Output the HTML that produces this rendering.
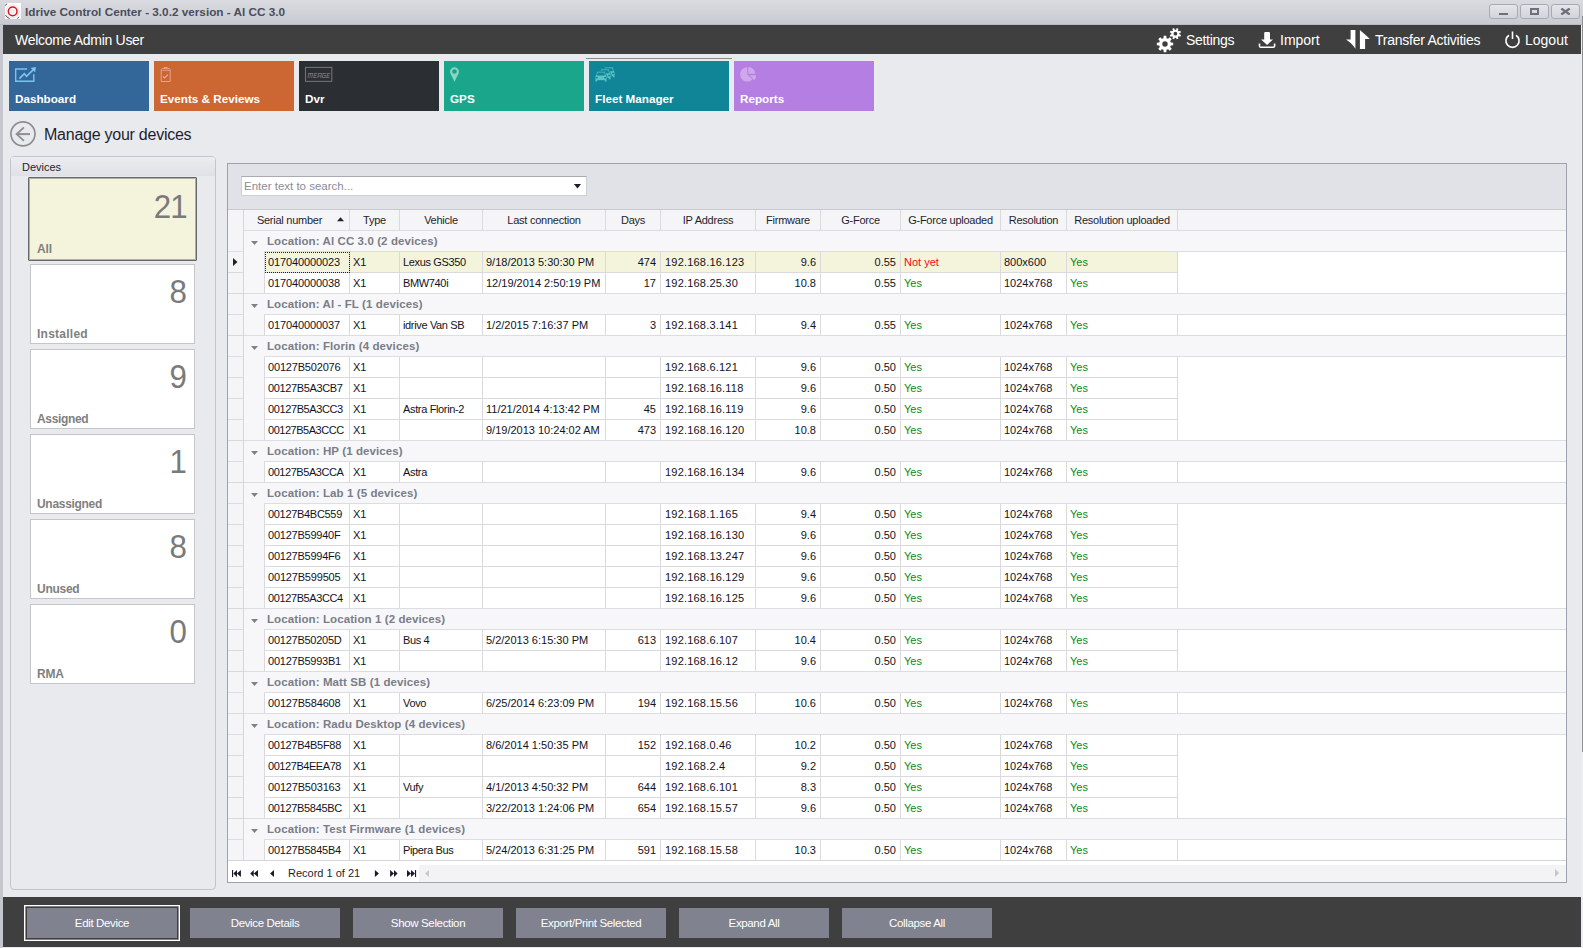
<!DOCTYPE html><html><head><meta charset="utf-8"><title>Idrive Control Center</title><style>
*{box-sizing:border-box}
html,body{margin:0;padding:0}
body{width:1583px;height:948px;overflow:hidden;position:relative;background:#e9eaee;font-family:"Liberation Sans",sans-serif;color:#1e1e2e}
.a{position:absolute}
.t{white-space:nowrap;line-height:1}
#title{left:0;top:0;width:1583px;height:25px;background:linear-gradient(#dadbe0,#c9cad1)}
#lb{left:0;top:25px;width:3px;height:923px;background:#c6c7ce}
#rb{left:1581px;top:25px;width:2px;height:923px;background:#ecedf0}
#topbar{left:3px;top:25px;width:1578px;height:29px;background:#3f3f3f}
#footer{left:3px;top:897px;width:1578px;height:50px;background:#3f3f3f}
.wbtn{top:4px;width:29px;height:15px;border:1px solid #a9aab3;border-radius:3px;background:linear-gradient(#e4e5ea,#d3d4da)}
.tile{top:61px;width:140px;height:50px}
.tile .lbl{position:absolute;left:6px;top:92px;color:#fff;font-weight:bold;font-size:11.7px}
.ttl{position:absolute;left:6px;top:32px;color:#fff;font-weight:bold;font-size:11.7px;line-height:1;white-space:nowrap}
.dtile{position:absolute;background:#fff;border:1px solid #c8c8cc}
.dtile .n{position:absolute;right:8px;font-size:32px;color:#7a7a7a;line-height:1}
.dtile .l{position:absolute;left:7px;font-size:11.5px;font-weight:bold;color:#7f7f7f;line-height:1}
.fbtn{position:absolute;top:908px;width:150px;height:30px;background:#808290;color:#fff;font-size:12px;text-align:center;line-height:30px}
.cell{position:absolute;height:21px;font-size:11px;line-height:21px;white-space:nowrap;overflow:hidden;color:#121224}
.hd{position:absolute;font-size:11px;letter-spacing:-0.25px;white-space:nowrap;color:#1e1e2e;line-height:20px;text-align:center}
.vl{position:absolute;width:1px;background:#d9d9de}
.hl{position:absolute;height:1px;background:#d9d9de}
.yes{color:#0b8a16}
.no{color:#f50a14}
</style></head><body>
<div class="a" id="title"></div><div class="a" style="left:0;top:24px;width:1583px;height:1px;background:#b9bac2"></div>
<div class="a" id="lb"></div><div class="a" id="rb"></div><div class="a" style="left:1582px;top:16px;width:1px;height:736px;background:#8e8e92"></div>
<div class="a" style="left:5px;top:3px;width:16px;height:16px;background:#fcfcfc"></div>
<svg class="a" style="left:5px;top:3px" width="16" height="16" viewBox="0 0 16 16"><circle cx="7.65" cy="8.3" r="6.6" fill="none" stroke="#dadada" stroke-width="0.6"/><circle cx="7.65" cy="8.3" r="4.35" fill="none" stroke="#e6101c" stroke-width="1.5"/><circle cx="7.65" cy="8.3" r="1.7" fill="none" stroke="#cfcfcf" stroke-width="0.6"/><path d="M0.3 2.6 L1.8 0.6 M0.6 12.2 A7.6 7.6 0 0 0 4.6 15.6 M12.3 15.6 L14 13.8" fill="none" stroke="#4a4a4a" stroke-width="1"/></svg>
<div class="a t" style="left:25px;top:6px;font-size:11.75px;font-weight:bold;color:#4a4d5c">Idrive Control Center - 3.0.2 version - Al CC 3.0</div>
<div class="a wbtn" style="left:1489px"></div><div class="a wbtn" style="left:1520px"></div><div class="a wbtn" style="left:1551px"></div>
<div class="a" style="left:1499px;top:13px;width:9px;height:2px;background:#6e707c"></div>
<div class="a" style="left:1530px;top:8px;width:9px;height:7px;border:2px solid #6e707c;border-width:2px 2px 2px 2px"></div>
<svg class="a" style="left:1560px;top:8px" width="11" height="7" viewBox="0 0 11 7"><path d="M1.3 0.5 L9.7 6.5 M9.7 0.5 L1.3 6.5" stroke="#6e707c" stroke-width="2.3"/></svg>
<div class="a" id="topbar"></div>
<div class="a t" style="left:15px;top:33px;font-size:14px;letter-spacing:-0.3px;color:#fff">Welcome Admin User</div>
<svg class="a" style="left:1155px;top:27px" width="28" height="26" viewBox="0 0 28 26"><path d="M8.55,11.18 L8.64,8.81 L11.36,8.81 L11.45,11.18 L13.09,11.86 L14.83,10.25 L16.75,12.17 L15.14,13.91 L15.82,15.55 L18.19,15.64 L18.19,18.36 L15.82,18.45 L15.14,20.09 L16.75,21.83 L14.83,23.75 L13.09,22.14 L11.45,22.82 L11.36,25.19 L8.64,25.19 L8.55,22.82 L6.91,22.14 L5.17,23.75 L3.25,21.83 L4.86,20.09 L4.18,18.45 L1.81,18.36 L1.81,15.64 L4.18,15.55 L4.86,13.91 L3.25,12.17 L5.17,10.25 L6.91,11.86Z" fill="#fff"/><circle cx="10" cy="17" r="2.7" fill="#3f3f3f"/><path d="M21.01,2.65 L21.71,1.05 L23.47,1.78 L22.84,3.40 L23.70,4.26 L25.32,3.63 L26.05,5.39 L24.45,6.09 L24.45,7.31 L26.05,8.01 L25.32,9.77 L23.70,9.14 L22.84,10.00 L23.47,11.62 L21.71,12.35 L21.01,10.75 L19.79,10.75 L19.09,12.35 L17.33,11.62 L17.96,10.00 L17.10,9.14 L15.48,9.77 L14.75,8.01 L16.35,7.31 L16.35,6.09 L14.75,5.39 L15.48,3.63 L17.10,4.26 L17.96,3.40 L17.33,1.78 L19.09,1.05 L19.79,2.65Z" fill="#fff"/><circle cx="20.4" cy="6.7" r="1.9" fill="#3f3f3f"/></svg>
<div class="a t" style="left:1186px;top:33px;font-size:14px;letter-spacing:-0.3px;color:#fff">Settings</div>
<svg class="a" style="left:1258px;top:31px" width="18" height="18" viewBox="0 0 18 18"><path d="M6.2 2.2 Q6.2 1 7.4 1 H10.8 Q12 1 12 2.2 V8.4 H15 L9.1 13.9 L3.1 8.4 H6.2Z" fill="#fff"/><path d="M1.5 12.4 V15 Q1.5 16.3 2.8 16.3 H15.3 Q16.6 16.3 16.6 15 V12.4" fill="none" stroke="#fff" stroke-width="1.6"/></svg>
<div class="a t" style="left:1280px;top:33px;font-size:14px;letter-spacing:0px;color:#fff">Import</div>
<svg class="a" style="left:1346px;top:29px" width="24" height="20" viewBox="0 0 24 20"><path d="M4.6 1 H9.4 V19.8 Q6.5 14.8 -0.1 10.4 H4.6 Z" fill="#fff"/><path d="M13.9 20 V1.1 Q17.5 4.2 23.8 9.9 H19.1 V20 Z" fill="#fff"/></svg>
<div class="a t" style="left:1375px;top:33px;font-size:14px;letter-spacing:-0.25px;color:#fff">Transfer Activities</div>
<svg class="a" style="left:1504px;top:31px" width="17" height="18" viewBox="0 0 17 18"><path d="M5 4.2 A6.6 6.6 0 1 0 12 4.2" fill="none" stroke="#fff" stroke-width="1.6"/><path d="M8.5 0.5 V8" stroke="#fff" stroke-width="1.6"/></svg>
<div class="a t" style="left:1525px;top:33px;font-size:14px;letter-spacing:0px;color:#fff">Logout</div>
<div class="a tile" style="left:9px;background:#336699"><div class="ttl">Dashboard</div></div>
<div class="a tile" style="left:154px;background:#cc6633"><div class="ttl">Events &amp; Reviews</div></div>
<div class="a tile" style="left:299px;background:#2b2e33"><div class="ttl">Dvr</div></div>
<div class="a tile" style="left:444px;background:#1aa68a"><div class="ttl">GPS</div></div>
<div class="a tile" style="left:589px;background:#0f8597"><div class="ttl">Fleet Manager</div></div>
<div class="a tile" style="left:734px;background:#b47ee2"><div class="ttl">Reports</div></div>
<div class="a" style="left:586px;top:58px;width:146px;height:1px;background:#8a8a8e"></div>
<svg class="a" style="left:14px;top:66px" width="24" height="17" viewBox="0 0 24 17"><path d="M13 3 H1.7 V15.3 H19.8 V8.2" fill="none" stroke="#7cc4ec" stroke-width="1.4"/><path d="M5.4 12.6 L10.3 7.6 L12.5 10.4 L19 4" fill="none" stroke="#80c8f0" stroke-width="1.6"/><path d="M22 0.9 L16.6 2 L21 6.2Z" fill="#80c8f0"/></svg>
<svg class="a" style="left:159px;top:66px" width="14" height="17" viewBox="0 0 14 17"><path d="M2.2 3.6 L3 2.6 H10.4 L11.2 3.6 V15.5 H2.2 Z" fill="none" stroke="#e3a48e" stroke-width="1"/><path d="M2.2 4.4 H11.2" stroke="#e3a48e" stroke-width="0.8"/><rect x="5" y="1" width="3.4" height="1.4" fill="#e3a48e"/><path d="M4 10.5 L5.6 12 L8.9 8.6" fill="none" stroke="#e8aca0" stroke-width="1.1"/></svg>
<svg class="a" style="left:304px;top:66px" width="30" height="18" viewBox="0 0 30 18"><rect x="1.5" y="1.4" width="26.3" height="14" fill="none" stroke="#707172" stroke-width="1.1"/><g fill="#6b6c6e" transform="translate(3.2 0) skewX(-12) scale(0.9 1)"><rect x="3" y="7" width="5.3" height="1.2"/><rect x="3" y="7" width="1" height="5"/><rect x="5.1" y="7" width="1" height="5"/><rect x="7.3" y="7" width="1" height="5"/><rect x="9.5" y="7" width="3.6" height="1"/><rect x="9.5" y="9" width="3" height="1"/><rect x="9.5" y="11" width="3.6" height="1"/><rect x="9.5" y="7" width="1" height="5"/><rect x="14" y="7" width="4" height="1"/><rect x="14" y="7" width="1" height="5"/><rect x="17.2" y="7" width="1" height="3"/><rect x="14" y="9.5" width="4" height="1"/><rect x="17.2" y="10" width="1" height="2"/><rect x="19" y="7" width="4" height="1"/><rect x="19" y="7" width="1" height="5"/><rect x="19" y="11" width="4" height="1"/><rect x="22" y="9" width="1" height="3"/><rect x="21" y="9" width="2" height="1"/><rect x="24" y="7" width="3.4" height="1"/><rect x="24" y="9" width="2.8" height="1"/><rect x="24" y="11" width="3.4" height="1"/><rect x="24" y="7" width="1" height="5"/></g></svg>
<svg class="a" style="left:449px;top:66px" width="12" height="17" viewBox="0 0 12 17"><path d="M5.5 15.7 L1.6 7.7 A4.4 4.4 0 1 1 9.4 7.7 Z" fill="#8ed4c3"/><circle cx="5.5" cy="5.5" r="2.3" fill="#17a589"/></svg>
<svg class="a" style="left:594px;top:66px" width="22" height="17" viewBox="0 0 22 17"><g transform="translate(9 1)"><path d="M1.5 0.9 Q1.6 0 2.6 0 H9.4 Q10.4 0 10.5 0.9 L11 4 Q12 4.4 12 5.5 V9.9 Q12 10.75 11.2 10.75 H10.3 Q9.6 10.75 9.6 10 V9.4 H2.4 V10 Q2.4 10.75 1.7 10.75 H0.8 Q0 10.75 0 9.9 V5.5 Q0 4.4 1 4 Z" fill="#5ec3c6" stroke="#0f8597" stroke-width="0.9"/><path d="M2.6 1.2 H9.4 L9.9 4.2 H2.1 Z" fill="#0f8597"/><circle cx="1.9" cy="6.4" r="0.95" fill="#0f8597"/><circle cx="10.1" cy="6.4" r="0.95" fill="#0f8597"/></g><g transform="translate(5 3)"><path d="M1.5 0.9 Q1.6 0 2.6 0 H9.4 Q10.4 0 10.5 0.9 L11 4 Q12 4.4 12 5.5 V9.9 Q12 10.75 11.2 10.75 H10.3 Q9.6 10.75 9.6 10 V9.4 H2.4 V10 Q2.4 10.75 1.7 10.75 H0.8 Q0 10.75 0 9.9 V5.5 Q0 4.4 1 4 Z" fill="#5ec3c6" stroke="#0f8597" stroke-width="0.9"/><path d="M2.6 1.2 H9.4 L9.9 4.2 H2.1 Z" fill="#0f8597"/><circle cx="1.9" cy="6.4" r="0.95" fill="#0f8597"/><circle cx="10.1" cy="6.4" r="0.95" fill="#0f8597"/></g><g transform="translate(1 5.25)"><path d="M1.5 0.9 Q1.6 0 2.6 0 H9.4 Q10.4 0 10.5 0.9 L11 4 Q12 4.4 12 5.5 V9.9 Q12 10.75 11.2 10.75 H10.3 Q9.6 10.75 9.6 10 V9.4 H2.4 V10 Q2.4 10.75 1.7 10.75 H0.8 Q0 10.75 0 9.9 V5.5 Q0 4.4 1 4 Z" fill="#5ec3c6" stroke="#0f8597" stroke-width="0.9"/><path d="M2.6 1.2 H9.4 L9.9 4.2 H2.1 Z" fill="#0f8597"/><circle cx="1.9" cy="6.4" r="0.95" fill="#0f8597"/><circle cx="10.1" cy="6.4" r="0.95" fill="#0f8597"/></g></svg>
<svg class="a" style="left:739px;top:66px" width="18" height="16" viewBox="0 0 18 16"><path d="M8.3 8.4 V1.2 A7.2 7.2 0 1 0 13.4 13.5 Z" fill="#cfa8ec"/><path d="M9.3 7.8 V0.9 A6.9 6.9 0 0 1 16.2 7.8 Z" fill="#cfa8ec"/><path d="M10.4 9.3 H17.2 A6.9 6.9 0 0 1 15.2 14.2 Z" fill="#cfa8ec"/></svg>
<svg class="a" style="left:9px;top:120px" width="28" height="28" viewBox="0 0 28 28"><circle cx="13.95" cy="13.85" r="12.05" fill="none" stroke="#8e8e92" stroke-width="1.7"/><path d="M7.6 14.1 H21" fill="none" stroke="#8e8e92" stroke-width="2"/><path d="M15 7.3 L7.6 14.1 L15 20.9" fill="none" stroke="#8e8e92" stroke-width="1.8"/></svg>
<div class="a t" style="left:44px;top:127px;font-size:16px;letter-spacing:-0.25px;color:#1e1e2e">Manage your devices</div>
<div class="a" style="left:10px;top:156px;width:206px;height:734px;border:1px solid #c4c5cc;border-radius:4px;background:#e9eaee"></div>
<div class="a" style="left:11px;top:157px;width:204px;height:19px;background:linear-gradient(#ecedf1,#e0e1e6);border-radius:2px 2px 0 0"></div>
<div class="a t" style="left:22px;top:162px;font-size:11px;color:#1e1e2e">Devices</div>
<div class="a" style="left:28px;top:177px;width:169px;height:84px;border:1px solid #68686c;box-shadow:inset 0 0 0 1px rgba(120,120,124,.55);background:#f4f4dc;border-radius:1px"></div>
<div class="a t" style="right:1396px;top:189px;font-size:34px;letter-spacing:-1px;transform:scaleX(0.92);transform-origin:100% 0;color:#7a7a7a">21</div>
<div class="a t" style="left:37px;top:243px;font-size:12px;letter-spacing:-0.1px;font-weight:bold;color:#7f7f7f">All</div>
<div class="a" style="left:30px;top:264px;width:165px;height:80px;border:1px solid #c6c6ca;background:#fff"></div>
<div class="a t" style="right:1396px;top:274px;font-size:34px;transform:scaleX(0.92);transform-origin:100% 0;color:#7a7a7a">8</div>
<div class="a t" style="left:37px;top:328px;font-size:12px;letter-spacing:0.25px;font-weight:bold;color:#7f7f7f">Installed</div>
<div class="a" style="left:30px;top:349px;width:165px;height:80px;border:1px solid #c6c6ca;background:#fff"></div>
<div class="a t" style="right:1396px;top:359px;font-size:34px;transform:scaleX(0.92);transform-origin:100% 0;color:#7a7a7a">9</div>
<div class="a t" style="left:37px;top:413px;font-size:12px;letter-spacing:-0.34px;font-weight:bold;color:#7f7f7f">Assigned</div>
<div class="a" style="left:30px;top:434px;width:165px;height:80px;border:1px solid #c6c6ca;background:#fff"></div>
<div class="a t" style="right:1396px;top:444px;font-size:34px;transform:scaleX(0.92);transform-origin:100% 0;color:#7a7a7a">1</div>
<div class="a t" style="left:37px;top:498px;font-size:12px;letter-spacing:-0.3px;font-weight:bold;color:#7f7f7f">Unassigned</div>
<div class="a" style="left:30px;top:519px;width:165px;height:80px;border:1px solid #c6c6ca;background:#fff"></div>
<div class="a t" style="right:1396px;top:529px;font-size:34px;transform:scaleX(0.92);transform-origin:100% 0;color:#7a7a7a">8</div>
<div class="a t" style="left:37px;top:583px;font-size:12px;letter-spacing:-0.27px;font-weight:bold;color:#7f7f7f">Unused</div>
<div class="a" style="left:30px;top:604px;width:165px;height:80px;border:1px solid #c6c6ca;background:#fff"></div>
<div class="a t" style="right:1396px;top:614px;font-size:34px;transform:scaleX(0.92);transform-origin:100% 0;color:#7a7a7a">0</div>
<div class="a t" style="left:37px;top:668px;font-size:12px;letter-spacing:-0.2px;font-weight:bold;color:#7f7f7f">RMA</div>
<div class="a" style="left:227px;top:163px;width:1340px;height:720px;border:1px solid #9fa1ac;background:#fff"></div>
<div class="a" style="left:228px;top:164px;width:1338px;height:45px;background:#e1e2e7"></div>
<div class="a" style="left:241px;top:176px;width:346px;height:20px;border:1px solid #cfd0d6;border-top-color:#a9aab2;background:#fff"></div>
<div class="a t" style="left:244px;top:181px;font-size:11.5px;color:#8a8c98">Enter text to search...</div>
<svg class="a" style="left:574px;top:184px" width="8" height="5" viewBox="0 0 8 5"><path d="M0 0 H7 L3.5 4.5Z" fill="#1a1a2a"/></svg>
<div class="a" style="left:228px;top:209px;width:1338px;height:1px;background:#c9cad0"></div>
<div class="a" style="left:228px;top:210px;width:1338px;height:20px;background:#f5f5f7"></div>
<div class="a" style="left:228px;top:230px;width:1338px;height:1px;background:#d5d6db"></div>
<div class="a" style="left:228px;top:210px;width:15px;height:651px;background:#f5f5f7"></div>
<div class="a" style="left:228px;top:861px;width:1338px;height:21px;background:#fff"></div>
<div class="a" style="left:419px;top:865px;width:1147px;height:17px;background:#f3f3f5"></div>
<div class="hd" style="left:244px;top:210px;width:91px">Serial number</div>
<svg class="a" style="left:337px;top:217px" width="7" height="5" viewBox="0 0 7 5"><path d="M0 4.3 H7 L3.5 0.3Z" fill="#222"/></svg>
<div class="vl" style="left:349px;top:210px;height:20px"></div>
<div class="hd" style="left:350px;top:210px;width:49px">Type</div>
<div class="vl" style="left:399px;top:210px;height:20px"></div>
<div class="hd" style="left:400px;top:210px;width:82px">Vehicle</div>
<div class="vl" style="left:482px;top:210px;height:20px"></div>
<div class="hd" style="left:483px;top:210px;width:122px">Last connection</div>
<div class="vl" style="left:605px;top:210px;height:20px"></div>
<div class="hd" style="left:606px;top:210px;width:54px">Days</div>
<div class="vl" style="left:660px;top:210px;height:20px"></div>
<div class="hd" style="left:661px;top:210px;width:94px">IP Address</div>
<div class="vl" style="left:755px;top:210px;height:20px"></div>
<div class="hd" style="left:756px;top:210px;width:64px">Firmware</div>
<div class="vl" style="left:820px;top:210px;height:20px"></div>
<div class="hd" style="left:821px;top:210px;width:79px">G-Force</div>
<div class="vl" style="left:900px;top:210px;height:20px"></div>
<div class="hd" style="left:901px;top:210px;width:99px">G-Force uploaded</div>
<div class="vl" style="left:1000px;top:210px;height:20px"></div>
<div class="hd" style="left:1001px;top:210px;width:65px">Resolution</div>
<div class="vl" style="left:1066px;top:210px;height:20px"></div>
<div class="hd" style="left:1067px;top:210px;width:110px">Resolution uploaded</div>
<div class="vl" style="left:1177px;top:210px;height:20px"></div>
<div class="vl" style="left:243px;top:210px;height:651px;background:#d5d6db"></div>
<div class="a" style="left:244px;top:231px;width:1322px;height:21px;background:#f7f7f9"></div>
<div class="hl" style="left:244px;top:230px;width:1322px;background:#dcdde2"></div>
<svg class="a" style="left:251px;top:241px" width="8" height="5" viewBox="0 0 8 5"><path d="M0 0 H7 L3.5 4Z" fill="#808088"/></svg>
<div class="a t" style="left:267px;top:236px;font-size:11.5px;letter-spacing:0.1px;font-weight:bold;color:#7b7d88">Location: Al CC 3.0 (2 devices)</div>
<div class="hl" style="left:228px;top:251px;width:15px;background:#dcdde2"></div>
<div class="hl" style="left:264px;top:251px;width:1302px;background:#dcdde2"></div>
<div class="a" style="left:244px;top:252px;width:20px;height:21px;background:#f7f7f9"></div>
<div class="a" style="left:265px;top:252px;width:912px;height:20px;background:#f4f4dc"></div>
<div class="cell" style="left:268px;top:252px;width:81px;letter-spacing:-0.12px">017040000023</div>
<div class="vl" style="left:349px;top:252px;height:20px"></div>
<div class="cell" style="left:353px;top:252px;width:46px">X1</div>
<div class="vl" style="left:399px;top:252px;height:20px"></div>
<div class="cell" style="left:403px;top:252px;width:79px;letter-spacing:-0.35px">Lexus GS350</div>
<div class="vl" style="left:482px;top:252px;height:20px"></div>
<div class="cell" style="left:486px;top:252px;width:119px">9/18/2013 5:30:30 PM</div>
<div class="vl" style="left:605px;top:252px;height:20px"></div>
<div class="cell" style="left:606px;top:252px;width:50px;text-align:right">474</div>
<div class="vl" style="left:660px;top:252px;height:20px"></div>
<div class="cell" style="left:665px;top:252px;width:90px;letter-spacing:0.2px">192.168.16.123</div>
<div class="vl" style="left:755px;top:252px;height:20px"></div>
<div class="cell" style="left:756px;top:252px;width:60px;text-align:right">9.6</div>
<div class="vl" style="left:820px;top:252px;height:20px"></div>
<div class="cell" style="left:821px;top:252px;width:75px;text-align:right">0.55</div>
<div class="vl" style="left:900px;top:252px;height:20px"></div>
<div class="cell no" style="left:904px;top:252px;width:96px">Not yet</div>
<div class="vl" style="left:1000px;top:252px;height:20px"></div>
<div class="cell" style="left:1004px;top:252px;width:62px">800x600</div>
<div class="vl" style="left:1066px;top:252px;height:20px"></div>
<div class="cell yes" style="left:1070px;top:252px;width:107px">Yes</div>
<div class="vl" style="left:1177px;top:252px;height:20px"></div>
<div class="vl" style="left:264px;top:252px;height:21px"></div>
<div class="hl" style="left:264px;top:272px;width:914px"></div>
<svg class="a" style="left:233px;top:258px" width="5" height="9" viewBox="0 0 5 9"><path d="M0 0 V8 L4.5 4Z" fill="#222"/></svg>
<div class="a" style="left:265px;top:252px;width:85px;height:21px;border:1px dotted #222"></div>
<div class="hl" style="left:228px;top:272px;width:15px"></div>
<div class="a" style="left:244px;top:273px;width:20px;height:21px;background:#f7f7f9"></div>
<div class="a" style="left:265px;top:273px;width:912px;height:20px;background:#fff"></div>
<div class="cell" style="left:268px;top:273px;width:81px;letter-spacing:-0.12px">017040000038</div>
<div class="vl" style="left:349px;top:273px;height:20px"></div>
<div class="cell" style="left:353px;top:273px;width:46px">X1</div>
<div class="vl" style="left:399px;top:273px;height:20px"></div>
<div class="cell" style="left:403px;top:273px;width:79px;letter-spacing:-0.35px">BMW740i</div>
<div class="vl" style="left:482px;top:273px;height:20px"></div>
<div class="cell" style="left:486px;top:273px;width:119px">12/19/2014 2:50:19 PM</div>
<div class="vl" style="left:605px;top:273px;height:20px"></div>
<div class="cell" style="left:606px;top:273px;width:50px;text-align:right">17</div>
<div class="vl" style="left:660px;top:273px;height:20px"></div>
<div class="cell" style="left:665px;top:273px;width:90px;letter-spacing:0.2px">192.168.25.30</div>
<div class="vl" style="left:755px;top:273px;height:20px"></div>
<div class="cell" style="left:756px;top:273px;width:60px;text-align:right">10.8</div>
<div class="vl" style="left:820px;top:273px;height:20px"></div>
<div class="cell" style="left:821px;top:273px;width:75px;text-align:right">0.55</div>
<div class="vl" style="left:900px;top:273px;height:20px"></div>
<div class="cell yes" style="left:904px;top:273px;width:96px">Yes</div>
<div class="vl" style="left:1000px;top:273px;height:20px"></div>
<div class="cell" style="left:1004px;top:273px;width:62px">1024x768</div>
<div class="vl" style="left:1066px;top:273px;height:20px"></div>
<div class="cell yes" style="left:1070px;top:273px;width:107px">Yes</div>
<div class="vl" style="left:1177px;top:273px;height:20px"></div>
<div class="vl" style="left:264px;top:273px;height:21px"></div>
<div class="hl" style="left:264px;top:293px;width:914px"></div>
<div class="hl" style="left:228px;top:293px;width:15px"></div>
<div class="a" style="left:244px;top:294px;width:1322px;height:21px;background:#f7f7f9"></div>
<div class="hl" style="left:244px;top:293px;width:1322px;background:#dcdde2"></div>
<svg class="a" style="left:251px;top:304px" width="8" height="5" viewBox="0 0 8 5"><path d="M0 0 H7 L3.5 4Z" fill="#808088"/></svg>
<div class="a t" style="left:267px;top:299px;font-size:11.5px;letter-spacing:0.1px;font-weight:bold;color:#7b7d88">Location: Al - FL (1 devices)</div>
<div class="hl" style="left:228px;top:314px;width:15px;background:#dcdde2"></div>
<div class="hl" style="left:264px;top:314px;width:1302px;background:#dcdde2"></div>
<div class="a" style="left:244px;top:315px;width:20px;height:21px;background:#f7f7f9"></div>
<div class="a" style="left:265px;top:315px;width:912px;height:20px;background:#fff"></div>
<div class="cell" style="left:268px;top:315px;width:81px;letter-spacing:-0.12px">017040000037</div>
<div class="vl" style="left:349px;top:315px;height:20px"></div>
<div class="cell" style="left:353px;top:315px;width:46px">X1</div>
<div class="vl" style="left:399px;top:315px;height:20px"></div>
<div class="cell" style="left:403px;top:315px;width:79px;letter-spacing:-0.35px">idrive Van SB</div>
<div class="vl" style="left:482px;top:315px;height:20px"></div>
<div class="cell" style="left:486px;top:315px;width:119px">1/2/2015 7:16:37 PM</div>
<div class="vl" style="left:605px;top:315px;height:20px"></div>
<div class="cell" style="left:606px;top:315px;width:50px;text-align:right">3</div>
<div class="vl" style="left:660px;top:315px;height:20px"></div>
<div class="cell" style="left:665px;top:315px;width:90px;letter-spacing:0.2px">192.168.3.141</div>
<div class="vl" style="left:755px;top:315px;height:20px"></div>
<div class="cell" style="left:756px;top:315px;width:60px;text-align:right">9.4</div>
<div class="vl" style="left:820px;top:315px;height:20px"></div>
<div class="cell" style="left:821px;top:315px;width:75px;text-align:right">0.55</div>
<div class="vl" style="left:900px;top:315px;height:20px"></div>
<div class="cell yes" style="left:904px;top:315px;width:96px">Yes</div>
<div class="vl" style="left:1000px;top:315px;height:20px"></div>
<div class="cell" style="left:1004px;top:315px;width:62px">1024x768</div>
<div class="vl" style="left:1066px;top:315px;height:20px"></div>
<div class="cell yes" style="left:1070px;top:315px;width:107px">Yes</div>
<div class="vl" style="left:1177px;top:315px;height:20px"></div>
<div class="vl" style="left:264px;top:315px;height:21px"></div>
<div class="hl" style="left:264px;top:335px;width:914px"></div>
<div class="hl" style="left:228px;top:335px;width:15px"></div>
<div class="a" style="left:244px;top:336px;width:1322px;height:21px;background:#f7f7f9"></div>
<div class="hl" style="left:244px;top:335px;width:1322px;background:#dcdde2"></div>
<svg class="a" style="left:251px;top:346px" width="8" height="5" viewBox="0 0 8 5"><path d="M0 0 H7 L3.5 4Z" fill="#808088"/></svg>
<div class="a t" style="left:267px;top:341px;font-size:11.5px;letter-spacing:0.1px;font-weight:bold;color:#7b7d88">Location: Florin (4 devices)</div>
<div class="hl" style="left:228px;top:356px;width:15px;background:#dcdde2"></div>
<div class="hl" style="left:264px;top:356px;width:1302px;background:#dcdde2"></div>
<div class="a" style="left:244px;top:357px;width:20px;height:21px;background:#f7f7f9"></div>
<div class="a" style="left:265px;top:357px;width:912px;height:20px;background:#fff"></div>
<div class="cell" style="left:268px;top:357px;width:81px;letter-spacing:-0.18px">00127B502076</div>
<div class="vl" style="left:349px;top:357px;height:20px"></div>
<div class="cell" style="left:353px;top:357px;width:46px">X1</div>
<div class="vl" style="left:399px;top:357px;height:20px"></div>
<div class="cell" style="left:403px;top:357px;width:79px"></div>
<div class="vl" style="left:482px;top:357px;height:20px"></div>
<div class="cell" style="left:486px;top:357px;width:119px"></div>
<div class="vl" style="left:605px;top:357px;height:20px"></div>
<div class="cell" style="left:606px;top:357px;width:50px;text-align:right"></div>
<div class="vl" style="left:660px;top:357px;height:20px"></div>
<div class="cell" style="left:665px;top:357px;width:90px;letter-spacing:0.2px">192.168.6.121</div>
<div class="vl" style="left:755px;top:357px;height:20px"></div>
<div class="cell" style="left:756px;top:357px;width:60px;text-align:right">9.6</div>
<div class="vl" style="left:820px;top:357px;height:20px"></div>
<div class="cell" style="left:821px;top:357px;width:75px;text-align:right">0.50</div>
<div class="vl" style="left:900px;top:357px;height:20px"></div>
<div class="cell yes" style="left:904px;top:357px;width:96px">Yes</div>
<div class="vl" style="left:1000px;top:357px;height:20px"></div>
<div class="cell" style="left:1004px;top:357px;width:62px">1024x768</div>
<div class="vl" style="left:1066px;top:357px;height:20px"></div>
<div class="cell yes" style="left:1070px;top:357px;width:107px">Yes</div>
<div class="vl" style="left:1177px;top:357px;height:20px"></div>
<div class="vl" style="left:264px;top:357px;height:21px"></div>
<div class="hl" style="left:264px;top:377px;width:914px"></div>
<div class="hl" style="left:228px;top:377px;width:15px"></div>
<div class="a" style="left:244px;top:378px;width:20px;height:21px;background:#f7f7f9"></div>
<div class="a" style="left:265px;top:378px;width:912px;height:20px;background:#fff"></div>
<div class="cell" style="left:268px;top:378px;width:81px;letter-spacing:-0.37px">00127B5A3CB7</div>
<div class="vl" style="left:349px;top:378px;height:20px"></div>
<div class="cell" style="left:353px;top:378px;width:46px">X1</div>
<div class="vl" style="left:399px;top:378px;height:20px"></div>
<div class="cell" style="left:403px;top:378px;width:79px"></div>
<div class="vl" style="left:482px;top:378px;height:20px"></div>
<div class="cell" style="left:486px;top:378px;width:119px"></div>
<div class="vl" style="left:605px;top:378px;height:20px"></div>
<div class="cell" style="left:606px;top:378px;width:50px;text-align:right"></div>
<div class="vl" style="left:660px;top:378px;height:20px"></div>
<div class="cell" style="left:665px;top:378px;width:90px;letter-spacing:0.2px">192.168.16.118</div>
<div class="vl" style="left:755px;top:378px;height:20px"></div>
<div class="cell" style="left:756px;top:378px;width:60px;text-align:right">9.6</div>
<div class="vl" style="left:820px;top:378px;height:20px"></div>
<div class="cell" style="left:821px;top:378px;width:75px;text-align:right">0.50</div>
<div class="vl" style="left:900px;top:378px;height:20px"></div>
<div class="cell yes" style="left:904px;top:378px;width:96px">Yes</div>
<div class="vl" style="left:1000px;top:378px;height:20px"></div>
<div class="cell" style="left:1004px;top:378px;width:62px">1024x768</div>
<div class="vl" style="left:1066px;top:378px;height:20px"></div>
<div class="cell yes" style="left:1070px;top:378px;width:107px">Yes</div>
<div class="vl" style="left:1177px;top:378px;height:20px"></div>
<div class="vl" style="left:264px;top:378px;height:21px"></div>
<div class="hl" style="left:264px;top:398px;width:914px"></div>
<div class="hl" style="left:228px;top:398px;width:15px"></div>
<div class="a" style="left:244px;top:399px;width:20px;height:21px;background:#f7f7f9"></div>
<div class="a" style="left:265px;top:399px;width:912px;height:20px;background:#fff"></div>
<div class="cell" style="left:268px;top:399px;width:81px;letter-spacing:-0.39px">00127B5A3CC3</div>
<div class="vl" style="left:349px;top:399px;height:20px"></div>
<div class="cell" style="left:353px;top:399px;width:46px">X1</div>
<div class="vl" style="left:399px;top:399px;height:20px"></div>
<div class="cell" style="left:403px;top:399px;width:79px;letter-spacing:-0.35px">Astra Florin-2</div>
<div class="vl" style="left:482px;top:399px;height:20px"></div>
<div class="cell" style="left:486px;top:399px;width:119px">11/21/2014 4:13:42 PM</div>
<div class="vl" style="left:605px;top:399px;height:20px"></div>
<div class="cell" style="left:606px;top:399px;width:50px;text-align:right">45</div>
<div class="vl" style="left:660px;top:399px;height:20px"></div>
<div class="cell" style="left:665px;top:399px;width:90px;letter-spacing:0.2px">192.168.16.119</div>
<div class="vl" style="left:755px;top:399px;height:20px"></div>
<div class="cell" style="left:756px;top:399px;width:60px;text-align:right">9.6</div>
<div class="vl" style="left:820px;top:399px;height:20px"></div>
<div class="cell" style="left:821px;top:399px;width:75px;text-align:right">0.50</div>
<div class="vl" style="left:900px;top:399px;height:20px"></div>
<div class="cell yes" style="left:904px;top:399px;width:96px">Yes</div>
<div class="vl" style="left:1000px;top:399px;height:20px"></div>
<div class="cell" style="left:1004px;top:399px;width:62px">1024x768</div>
<div class="vl" style="left:1066px;top:399px;height:20px"></div>
<div class="cell yes" style="left:1070px;top:399px;width:107px">Yes</div>
<div class="vl" style="left:1177px;top:399px;height:20px"></div>
<div class="vl" style="left:264px;top:399px;height:21px"></div>
<div class="hl" style="left:264px;top:419px;width:914px"></div>
<div class="hl" style="left:228px;top:419px;width:15px"></div>
<div class="a" style="left:244px;top:420px;width:20px;height:21px;background:#f7f7f9"></div>
<div class="a" style="left:265px;top:420px;width:912px;height:20px;background:#fff"></div>
<div class="cell" style="left:268px;top:420px;width:81px;letter-spacing:-0.47px">00127B5A3CCC</div>
<div class="vl" style="left:349px;top:420px;height:20px"></div>
<div class="cell" style="left:353px;top:420px;width:46px">X1</div>
<div class="vl" style="left:399px;top:420px;height:20px"></div>
<div class="cell" style="left:403px;top:420px;width:79px"></div>
<div class="vl" style="left:482px;top:420px;height:20px"></div>
<div class="cell" style="left:486px;top:420px;width:119px">9/19/2013 10:24:02 AM</div>
<div class="vl" style="left:605px;top:420px;height:20px"></div>
<div class="cell" style="left:606px;top:420px;width:50px;text-align:right">473</div>
<div class="vl" style="left:660px;top:420px;height:20px"></div>
<div class="cell" style="left:665px;top:420px;width:90px;letter-spacing:0.2px">192.168.16.120</div>
<div class="vl" style="left:755px;top:420px;height:20px"></div>
<div class="cell" style="left:756px;top:420px;width:60px;text-align:right">10.8</div>
<div class="vl" style="left:820px;top:420px;height:20px"></div>
<div class="cell" style="left:821px;top:420px;width:75px;text-align:right">0.50</div>
<div class="vl" style="left:900px;top:420px;height:20px"></div>
<div class="cell yes" style="left:904px;top:420px;width:96px">Yes</div>
<div class="vl" style="left:1000px;top:420px;height:20px"></div>
<div class="cell" style="left:1004px;top:420px;width:62px">1024x768</div>
<div class="vl" style="left:1066px;top:420px;height:20px"></div>
<div class="cell yes" style="left:1070px;top:420px;width:107px">Yes</div>
<div class="vl" style="left:1177px;top:420px;height:20px"></div>
<div class="vl" style="left:264px;top:420px;height:21px"></div>
<div class="hl" style="left:264px;top:440px;width:914px"></div>
<div class="hl" style="left:228px;top:440px;width:15px"></div>
<div class="a" style="left:244px;top:441px;width:1322px;height:21px;background:#f7f7f9"></div>
<div class="hl" style="left:244px;top:440px;width:1322px;background:#dcdde2"></div>
<svg class="a" style="left:251px;top:451px" width="8" height="5" viewBox="0 0 8 5"><path d="M0 0 H7 L3.5 4Z" fill="#808088"/></svg>
<div class="a t" style="left:267px;top:446px;font-size:11.5px;letter-spacing:0.1px;font-weight:bold;color:#7b7d88">Location: HP (1 devices)</div>
<div class="hl" style="left:228px;top:461px;width:15px;background:#dcdde2"></div>
<div class="hl" style="left:264px;top:461px;width:1302px;background:#dcdde2"></div>
<div class="a" style="left:244px;top:462px;width:20px;height:21px;background:#f7f7f9"></div>
<div class="a" style="left:265px;top:462px;width:912px;height:20px;background:#fff"></div>
<div class="cell" style="left:268px;top:462px;width:81px;letter-spacing:-0.45px">00127B5A3CCA</div>
<div class="vl" style="left:349px;top:462px;height:20px"></div>
<div class="cell" style="left:353px;top:462px;width:46px">X1</div>
<div class="vl" style="left:399px;top:462px;height:20px"></div>
<div class="cell" style="left:403px;top:462px;width:79px;letter-spacing:-0.35px">Astra</div>
<div class="vl" style="left:482px;top:462px;height:20px"></div>
<div class="cell" style="left:486px;top:462px;width:119px"></div>
<div class="vl" style="left:605px;top:462px;height:20px"></div>
<div class="cell" style="left:606px;top:462px;width:50px;text-align:right"></div>
<div class="vl" style="left:660px;top:462px;height:20px"></div>
<div class="cell" style="left:665px;top:462px;width:90px;letter-spacing:0.2px">192.168.16.134</div>
<div class="vl" style="left:755px;top:462px;height:20px"></div>
<div class="cell" style="left:756px;top:462px;width:60px;text-align:right">9.6</div>
<div class="vl" style="left:820px;top:462px;height:20px"></div>
<div class="cell" style="left:821px;top:462px;width:75px;text-align:right">0.50</div>
<div class="vl" style="left:900px;top:462px;height:20px"></div>
<div class="cell yes" style="left:904px;top:462px;width:96px">Yes</div>
<div class="vl" style="left:1000px;top:462px;height:20px"></div>
<div class="cell" style="left:1004px;top:462px;width:62px">1024x768</div>
<div class="vl" style="left:1066px;top:462px;height:20px"></div>
<div class="cell yes" style="left:1070px;top:462px;width:107px">Yes</div>
<div class="vl" style="left:1177px;top:462px;height:20px"></div>
<div class="vl" style="left:264px;top:462px;height:21px"></div>
<div class="hl" style="left:264px;top:482px;width:914px"></div>
<div class="hl" style="left:228px;top:482px;width:15px"></div>
<div class="a" style="left:244px;top:483px;width:1322px;height:21px;background:#f7f7f9"></div>
<div class="hl" style="left:244px;top:482px;width:1322px;background:#dcdde2"></div>
<svg class="a" style="left:251px;top:493px" width="8" height="5" viewBox="0 0 8 5"><path d="M0 0 H7 L3.5 4Z" fill="#808088"/></svg>
<div class="a t" style="left:267px;top:488px;font-size:11.5px;letter-spacing:0.1px;font-weight:bold;color:#7b7d88">Location: Lab 1 (5 devices)</div>
<div class="hl" style="left:228px;top:503px;width:15px;background:#dcdde2"></div>
<div class="hl" style="left:264px;top:503px;width:1302px;background:#dcdde2"></div>
<div class="a" style="left:244px;top:504px;width:20px;height:21px;background:#f7f7f9"></div>
<div class="a" style="left:265px;top:504px;width:912px;height:20px;background:#fff"></div>
<div class="cell" style="left:268px;top:504px;width:81px;letter-spacing:-0.31px">00127B4BC559</div>
<div class="vl" style="left:349px;top:504px;height:20px"></div>
<div class="cell" style="left:353px;top:504px;width:46px">X1</div>
<div class="vl" style="left:399px;top:504px;height:20px"></div>
<div class="cell" style="left:403px;top:504px;width:79px"></div>
<div class="vl" style="left:482px;top:504px;height:20px"></div>
<div class="cell" style="left:486px;top:504px;width:119px"></div>
<div class="vl" style="left:605px;top:504px;height:20px"></div>
<div class="cell" style="left:606px;top:504px;width:50px;text-align:right"></div>
<div class="vl" style="left:660px;top:504px;height:20px"></div>
<div class="cell" style="left:665px;top:504px;width:90px;letter-spacing:0.2px">192.168.1.165</div>
<div class="vl" style="left:755px;top:504px;height:20px"></div>
<div class="cell" style="left:756px;top:504px;width:60px;text-align:right">9.4</div>
<div class="vl" style="left:820px;top:504px;height:20px"></div>
<div class="cell" style="left:821px;top:504px;width:75px;text-align:right">0.50</div>
<div class="vl" style="left:900px;top:504px;height:20px"></div>
<div class="cell yes" style="left:904px;top:504px;width:96px">Yes</div>
<div class="vl" style="left:1000px;top:504px;height:20px"></div>
<div class="cell" style="left:1004px;top:504px;width:62px">1024x768</div>
<div class="vl" style="left:1066px;top:504px;height:20px"></div>
<div class="cell yes" style="left:1070px;top:504px;width:107px">Yes</div>
<div class="vl" style="left:1177px;top:504px;height:20px"></div>
<div class="vl" style="left:264px;top:504px;height:21px"></div>
<div class="hl" style="left:264px;top:524px;width:914px"></div>
<div class="hl" style="left:228px;top:524px;width:15px"></div>
<div class="a" style="left:244px;top:525px;width:20px;height:21px;background:#f7f7f9"></div>
<div class="a" style="left:265px;top:525px;width:912px;height:20px;background:#fff"></div>
<div class="cell" style="left:268px;top:525px;width:81px;letter-spacing:-0.23px">00127B59940F</div>
<div class="vl" style="left:349px;top:525px;height:20px"></div>
<div class="cell" style="left:353px;top:525px;width:46px">X1</div>
<div class="vl" style="left:399px;top:525px;height:20px"></div>
<div class="cell" style="left:403px;top:525px;width:79px"></div>
<div class="vl" style="left:482px;top:525px;height:20px"></div>
<div class="cell" style="left:486px;top:525px;width:119px"></div>
<div class="vl" style="left:605px;top:525px;height:20px"></div>
<div class="cell" style="left:606px;top:525px;width:50px;text-align:right"></div>
<div class="vl" style="left:660px;top:525px;height:20px"></div>
<div class="cell" style="left:665px;top:525px;width:90px;letter-spacing:0.2px">192.168.16.130</div>
<div class="vl" style="left:755px;top:525px;height:20px"></div>
<div class="cell" style="left:756px;top:525px;width:60px;text-align:right">9.6</div>
<div class="vl" style="left:820px;top:525px;height:20px"></div>
<div class="cell" style="left:821px;top:525px;width:75px;text-align:right">0.50</div>
<div class="vl" style="left:900px;top:525px;height:20px"></div>
<div class="cell yes" style="left:904px;top:525px;width:96px">Yes</div>
<div class="vl" style="left:1000px;top:525px;height:20px"></div>
<div class="cell" style="left:1004px;top:525px;width:62px">1024x768</div>
<div class="vl" style="left:1066px;top:525px;height:20px"></div>
<div class="cell yes" style="left:1070px;top:525px;width:107px">Yes</div>
<div class="vl" style="left:1177px;top:525px;height:20px"></div>
<div class="vl" style="left:264px;top:525px;height:21px"></div>
<div class="hl" style="left:264px;top:545px;width:914px"></div>
<div class="hl" style="left:228px;top:545px;width:15px"></div>
<div class="a" style="left:244px;top:546px;width:20px;height:21px;background:#f7f7f9"></div>
<div class="a" style="left:265px;top:546px;width:912px;height:20px;background:#fff"></div>
<div class="cell" style="left:268px;top:546px;width:81px;letter-spacing:-0.23px">00127B5994F6</div>
<div class="vl" style="left:349px;top:546px;height:20px"></div>
<div class="cell" style="left:353px;top:546px;width:46px">X1</div>
<div class="vl" style="left:399px;top:546px;height:20px"></div>
<div class="cell" style="left:403px;top:546px;width:79px"></div>
<div class="vl" style="left:482px;top:546px;height:20px"></div>
<div class="cell" style="left:486px;top:546px;width:119px"></div>
<div class="vl" style="left:605px;top:546px;height:20px"></div>
<div class="cell" style="left:606px;top:546px;width:50px;text-align:right"></div>
<div class="vl" style="left:660px;top:546px;height:20px"></div>
<div class="cell" style="left:665px;top:546px;width:90px;letter-spacing:0.2px">192.168.13.247</div>
<div class="vl" style="left:755px;top:546px;height:20px"></div>
<div class="cell" style="left:756px;top:546px;width:60px;text-align:right">9.6</div>
<div class="vl" style="left:820px;top:546px;height:20px"></div>
<div class="cell" style="left:821px;top:546px;width:75px;text-align:right">0.50</div>
<div class="vl" style="left:900px;top:546px;height:20px"></div>
<div class="cell yes" style="left:904px;top:546px;width:96px">Yes</div>
<div class="vl" style="left:1000px;top:546px;height:20px"></div>
<div class="cell" style="left:1004px;top:546px;width:62px">1024x768</div>
<div class="vl" style="left:1066px;top:546px;height:20px"></div>
<div class="cell yes" style="left:1070px;top:546px;width:107px">Yes</div>
<div class="vl" style="left:1177px;top:546px;height:20px"></div>
<div class="vl" style="left:264px;top:546px;height:21px"></div>
<div class="hl" style="left:264px;top:566px;width:914px"></div>
<div class="hl" style="left:228px;top:566px;width:15px"></div>
<div class="a" style="left:244px;top:567px;width:20px;height:21px;background:#f7f7f9"></div>
<div class="a" style="left:265px;top:567px;width:912px;height:20px;background:#fff"></div>
<div class="cell" style="left:268px;top:567px;width:81px;letter-spacing:-0.18px">00127B599505</div>
<div class="vl" style="left:349px;top:567px;height:20px"></div>
<div class="cell" style="left:353px;top:567px;width:46px">X1</div>
<div class="vl" style="left:399px;top:567px;height:20px"></div>
<div class="cell" style="left:403px;top:567px;width:79px"></div>
<div class="vl" style="left:482px;top:567px;height:20px"></div>
<div class="cell" style="left:486px;top:567px;width:119px"></div>
<div class="vl" style="left:605px;top:567px;height:20px"></div>
<div class="cell" style="left:606px;top:567px;width:50px;text-align:right"></div>
<div class="vl" style="left:660px;top:567px;height:20px"></div>
<div class="cell" style="left:665px;top:567px;width:90px;letter-spacing:0.2px">192.168.16.129</div>
<div class="vl" style="left:755px;top:567px;height:20px"></div>
<div class="cell" style="left:756px;top:567px;width:60px;text-align:right">9.6</div>
<div class="vl" style="left:820px;top:567px;height:20px"></div>
<div class="cell" style="left:821px;top:567px;width:75px;text-align:right">0.50</div>
<div class="vl" style="left:900px;top:567px;height:20px"></div>
<div class="cell yes" style="left:904px;top:567px;width:96px">Yes</div>
<div class="vl" style="left:1000px;top:567px;height:20px"></div>
<div class="cell" style="left:1004px;top:567px;width:62px">1024x768</div>
<div class="vl" style="left:1066px;top:567px;height:20px"></div>
<div class="cell yes" style="left:1070px;top:567px;width:107px">Yes</div>
<div class="vl" style="left:1177px;top:567px;height:20px"></div>
<div class="vl" style="left:264px;top:567px;height:21px"></div>
<div class="hl" style="left:264px;top:587px;width:914px"></div>
<div class="hl" style="left:228px;top:587px;width:15px"></div>
<div class="a" style="left:244px;top:588px;width:20px;height:21px;background:#f7f7f9"></div>
<div class="a" style="left:265px;top:588px;width:912px;height:20px;background:#fff"></div>
<div class="cell" style="left:268px;top:588px;width:81px;letter-spacing:-0.39px">00127B5A3CC4</div>
<div class="vl" style="left:349px;top:588px;height:20px"></div>
<div class="cell" style="left:353px;top:588px;width:46px">X1</div>
<div class="vl" style="left:399px;top:588px;height:20px"></div>
<div class="cell" style="left:403px;top:588px;width:79px"></div>
<div class="vl" style="left:482px;top:588px;height:20px"></div>
<div class="cell" style="left:486px;top:588px;width:119px"></div>
<div class="vl" style="left:605px;top:588px;height:20px"></div>
<div class="cell" style="left:606px;top:588px;width:50px;text-align:right"></div>
<div class="vl" style="left:660px;top:588px;height:20px"></div>
<div class="cell" style="left:665px;top:588px;width:90px;letter-spacing:0.2px">192.168.16.125</div>
<div class="vl" style="left:755px;top:588px;height:20px"></div>
<div class="cell" style="left:756px;top:588px;width:60px;text-align:right">9.6</div>
<div class="vl" style="left:820px;top:588px;height:20px"></div>
<div class="cell" style="left:821px;top:588px;width:75px;text-align:right">0.50</div>
<div class="vl" style="left:900px;top:588px;height:20px"></div>
<div class="cell yes" style="left:904px;top:588px;width:96px">Yes</div>
<div class="vl" style="left:1000px;top:588px;height:20px"></div>
<div class="cell" style="left:1004px;top:588px;width:62px">1024x768</div>
<div class="vl" style="left:1066px;top:588px;height:20px"></div>
<div class="cell yes" style="left:1070px;top:588px;width:107px">Yes</div>
<div class="vl" style="left:1177px;top:588px;height:20px"></div>
<div class="vl" style="left:264px;top:588px;height:21px"></div>
<div class="hl" style="left:264px;top:608px;width:914px"></div>
<div class="hl" style="left:228px;top:608px;width:15px"></div>
<div class="a" style="left:244px;top:609px;width:1322px;height:21px;background:#f7f7f9"></div>
<div class="hl" style="left:244px;top:608px;width:1322px;background:#dcdde2"></div>
<svg class="a" style="left:251px;top:619px" width="8" height="5" viewBox="0 0 8 5"><path d="M0 0 H7 L3.5 4Z" fill="#808088"/></svg>
<div class="a t" style="left:267px;top:614px;font-size:11.5px;letter-spacing:0.1px;font-weight:bold;color:#7b7d88">Location: Location 1 (2 devices)</div>
<div class="hl" style="left:228px;top:629px;width:15px;background:#dcdde2"></div>
<div class="hl" style="left:264px;top:629px;width:1302px;background:#dcdde2"></div>
<div class="a" style="left:244px;top:630px;width:20px;height:21px;background:#f7f7f9"></div>
<div class="a" style="left:265px;top:630px;width:912px;height:20px;background:#fff"></div>
<div class="cell" style="left:268px;top:630px;width:81px;letter-spacing:-0.24px">00127B50205D</div>
<div class="vl" style="left:349px;top:630px;height:20px"></div>
<div class="cell" style="left:353px;top:630px;width:46px">X1</div>
<div class="vl" style="left:399px;top:630px;height:20px"></div>
<div class="cell" style="left:403px;top:630px;width:79px;letter-spacing:-0.35px">Bus 4</div>
<div class="vl" style="left:482px;top:630px;height:20px"></div>
<div class="cell" style="left:486px;top:630px;width:119px">5/2/2013 6:15:30 PM</div>
<div class="vl" style="left:605px;top:630px;height:20px"></div>
<div class="cell" style="left:606px;top:630px;width:50px;text-align:right">613</div>
<div class="vl" style="left:660px;top:630px;height:20px"></div>
<div class="cell" style="left:665px;top:630px;width:90px;letter-spacing:0.2px">192.168.6.107</div>
<div class="vl" style="left:755px;top:630px;height:20px"></div>
<div class="cell" style="left:756px;top:630px;width:60px;text-align:right">10.4</div>
<div class="vl" style="left:820px;top:630px;height:20px"></div>
<div class="cell" style="left:821px;top:630px;width:75px;text-align:right">0.50</div>
<div class="vl" style="left:900px;top:630px;height:20px"></div>
<div class="cell yes" style="left:904px;top:630px;width:96px">Yes</div>
<div class="vl" style="left:1000px;top:630px;height:20px"></div>
<div class="cell" style="left:1004px;top:630px;width:62px">1024x768</div>
<div class="vl" style="left:1066px;top:630px;height:20px"></div>
<div class="cell yes" style="left:1070px;top:630px;width:107px">Yes</div>
<div class="vl" style="left:1177px;top:630px;height:20px"></div>
<div class="vl" style="left:264px;top:630px;height:21px"></div>
<div class="hl" style="left:264px;top:650px;width:914px"></div>
<div class="hl" style="left:228px;top:650px;width:15px"></div>
<div class="a" style="left:244px;top:651px;width:20px;height:21px;background:#f7f7f9"></div>
<div class="a" style="left:265px;top:651px;width:912px;height:20px;background:#fff"></div>
<div class="cell" style="left:268px;top:651px;width:81px;letter-spacing:-0.24px">00127B5993B1</div>
<div class="vl" style="left:349px;top:651px;height:20px"></div>
<div class="cell" style="left:353px;top:651px;width:46px">X1</div>
<div class="vl" style="left:399px;top:651px;height:20px"></div>
<div class="cell" style="left:403px;top:651px;width:79px"></div>
<div class="vl" style="left:482px;top:651px;height:20px"></div>
<div class="cell" style="left:486px;top:651px;width:119px"></div>
<div class="vl" style="left:605px;top:651px;height:20px"></div>
<div class="cell" style="left:606px;top:651px;width:50px;text-align:right"></div>
<div class="vl" style="left:660px;top:651px;height:20px"></div>
<div class="cell" style="left:665px;top:651px;width:90px;letter-spacing:0.2px">192.168.16.12</div>
<div class="vl" style="left:755px;top:651px;height:20px"></div>
<div class="cell" style="left:756px;top:651px;width:60px;text-align:right">9.6</div>
<div class="vl" style="left:820px;top:651px;height:20px"></div>
<div class="cell" style="left:821px;top:651px;width:75px;text-align:right">0.50</div>
<div class="vl" style="left:900px;top:651px;height:20px"></div>
<div class="cell yes" style="left:904px;top:651px;width:96px">Yes</div>
<div class="vl" style="left:1000px;top:651px;height:20px"></div>
<div class="cell" style="left:1004px;top:651px;width:62px">1024x768</div>
<div class="vl" style="left:1066px;top:651px;height:20px"></div>
<div class="cell yes" style="left:1070px;top:651px;width:107px">Yes</div>
<div class="vl" style="left:1177px;top:651px;height:20px"></div>
<div class="vl" style="left:264px;top:651px;height:21px"></div>
<div class="hl" style="left:264px;top:671px;width:914px"></div>
<div class="hl" style="left:228px;top:671px;width:15px"></div>
<div class="a" style="left:244px;top:672px;width:1322px;height:21px;background:#f7f7f9"></div>
<div class="hl" style="left:244px;top:671px;width:1322px;background:#dcdde2"></div>
<svg class="a" style="left:251px;top:682px" width="8" height="5" viewBox="0 0 8 5"><path d="M0 0 H7 L3.5 4Z" fill="#808088"/></svg>
<div class="a t" style="left:267px;top:677px;font-size:11.5px;letter-spacing:0.1px;font-weight:bold;color:#7b7d88">Location: Matt SB (1 devices)</div>
<div class="hl" style="left:228px;top:692px;width:15px;background:#dcdde2"></div>
<div class="hl" style="left:264px;top:692px;width:1302px;background:#dcdde2"></div>
<div class="a" style="left:244px;top:693px;width:20px;height:21px;background:#f7f7f9"></div>
<div class="a" style="left:265px;top:693px;width:912px;height:20px;background:#fff"></div>
<div class="cell" style="left:268px;top:693px;width:81px;letter-spacing:-0.18px">00127B584608</div>
<div class="vl" style="left:349px;top:693px;height:20px"></div>
<div class="cell" style="left:353px;top:693px;width:46px">X1</div>
<div class="vl" style="left:399px;top:693px;height:20px"></div>
<div class="cell" style="left:403px;top:693px;width:79px;letter-spacing:-0.35px">Vovo</div>
<div class="vl" style="left:482px;top:693px;height:20px"></div>
<div class="cell" style="left:486px;top:693px;width:119px">6/25/2014 6:23:09 PM</div>
<div class="vl" style="left:605px;top:693px;height:20px"></div>
<div class="cell" style="left:606px;top:693px;width:50px;text-align:right">194</div>
<div class="vl" style="left:660px;top:693px;height:20px"></div>
<div class="cell" style="left:665px;top:693px;width:90px;letter-spacing:0.2px">192.168.15.56</div>
<div class="vl" style="left:755px;top:693px;height:20px"></div>
<div class="cell" style="left:756px;top:693px;width:60px;text-align:right">10.6</div>
<div class="vl" style="left:820px;top:693px;height:20px"></div>
<div class="cell" style="left:821px;top:693px;width:75px;text-align:right">0.50</div>
<div class="vl" style="left:900px;top:693px;height:20px"></div>
<div class="cell yes" style="left:904px;top:693px;width:96px">Yes</div>
<div class="vl" style="left:1000px;top:693px;height:20px"></div>
<div class="cell" style="left:1004px;top:693px;width:62px">1024x768</div>
<div class="vl" style="left:1066px;top:693px;height:20px"></div>
<div class="cell yes" style="left:1070px;top:693px;width:107px">Yes</div>
<div class="vl" style="left:1177px;top:693px;height:20px"></div>
<div class="vl" style="left:264px;top:693px;height:21px"></div>
<div class="hl" style="left:264px;top:713px;width:914px"></div>
<div class="hl" style="left:228px;top:713px;width:15px"></div>
<div class="a" style="left:244px;top:714px;width:1322px;height:21px;background:#f7f7f9"></div>
<div class="hl" style="left:244px;top:713px;width:1322px;background:#dcdde2"></div>
<svg class="a" style="left:251px;top:724px" width="8" height="5" viewBox="0 0 8 5"><path d="M0 0 H7 L3.5 4Z" fill="#808088"/></svg>
<div class="a t" style="left:267px;top:719px;font-size:11.5px;letter-spacing:0.1px;font-weight:bold;color:#7b7d88">Location: Radu Desktop (4 devices)</div>
<div class="hl" style="left:228px;top:734px;width:15px;background:#dcdde2"></div>
<div class="hl" style="left:264px;top:734px;width:1302px;background:#dcdde2"></div>
<div class="a" style="left:244px;top:735px;width:20px;height:21px;background:#f7f7f9"></div>
<div class="a" style="left:265px;top:735px;width:912px;height:20px;background:#fff"></div>
<div class="cell" style="left:268px;top:735px;width:81px;letter-spacing:-0.29px">00127B4B5F88</div>
<div class="vl" style="left:349px;top:735px;height:20px"></div>
<div class="cell" style="left:353px;top:735px;width:46px">X1</div>
<div class="vl" style="left:399px;top:735px;height:20px"></div>
<div class="cell" style="left:403px;top:735px;width:79px"></div>
<div class="vl" style="left:482px;top:735px;height:20px"></div>
<div class="cell" style="left:486px;top:735px;width:119px">8/6/2014 1:50:35 PM</div>
<div class="vl" style="left:605px;top:735px;height:20px"></div>
<div class="cell" style="left:606px;top:735px;width:50px;text-align:right">152</div>
<div class="vl" style="left:660px;top:735px;height:20px"></div>
<div class="cell" style="left:665px;top:735px;width:90px;letter-spacing:0.2px">192.168.0.46</div>
<div class="vl" style="left:755px;top:735px;height:20px"></div>
<div class="cell" style="left:756px;top:735px;width:60px;text-align:right">10.2</div>
<div class="vl" style="left:820px;top:735px;height:20px"></div>
<div class="cell" style="left:821px;top:735px;width:75px;text-align:right">0.50</div>
<div class="vl" style="left:900px;top:735px;height:20px"></div>
<div class="cell yes" style="left:904px;top:735px;width:96px">Yes</div>
<div class="vl" style="left:1000px;top:735px;height:20px"></div>
<div class="cell" style="left:1004px;top:735px;width:62px">1024x768</div>
<div class="vl" style="left:1066px;top:735px;height:20px"></div>
<div class="cell yes" style="left:1070px;top:735px;width:107px">Yes</div>
<div class="vl" style="left:1177px;top:735px;height:20px"></div>
<div class="vl" style="left:264px;top:735px;height:21px"></div>
<div class="hl" style="left:264px;top:755px;width:914px"></div>
<div class="hl" style="left:228px;top:755px;width:15px"></div>
<div class="a" style="left:244px;top:756px;width:20px;height:21px;background:#f7f7f9"></div>
<div class="a" style="left:265px;top:756px;width:912px;height:20px;background:#fff"></div>
<div class="cell" style="left:268px;top:756px;width:81px;letter-spacing:-0.44px">00127B4EEA78</div>
<div class="vl" style="left:349px;top:756px;height:20px"></div>
<div class="cell" style="left:353px;top:756px;width:46px">X1</div>
<div class="vl" style="left:399px;top:756px;height:20px"></div>
<div class="cell" style="left:403px;top:756px;width:79px"></div>
<div class="vl" style="left:482px;top:756px;height:20px"></div>
<div class="cell" style="left:486px;top:756px;width:119px"></div>
<div class="vl" style="left:605px;top:756px;height:20px"></div>
<div class="cell" style="left:606px;top:756px;width:50px;text-align:right"></div>
<div class="vl" style="left:660px;top:756px;height:20px"></div>
<div class="cell" style="left:665px;top:756px;width:90px;letter-spacing:0.2px">192.168.2.4</div>
<div class="vl" style="left:755px;top:756px;height:20px"></div>
<div class="cell" style="left:756px;top:756px;width:60px;text-align:right">9.2</div>
<div class="vl" style="left:820px;top:756px;height:20px"></div>
<div class="cell" style="left:821px;top:756px;width:75px;text-align:right">0.50</div>
<div class="vl" style="left:900px;top:756px;height:20px"></div>
<div class="cell yes" style="left:904px;top:756px;width:96px">Yes</div>
<div class="vl" style="left:1000px;top:756px;height:20px"></div>
<div class="cell" style="left:1004px;top:756px;width:62px">1024x768</div>
<div class="vl" style="left:1066px;top:756px;height:20px"></div>
<div class="cell yes" style="left:1070px;top:756px;width:107px">Yes</div>
<div class="vl" style="left:1177px;top:756px;height:20px"></div>
<div class="vl" style="left:264px;top:756px;height:21px"></div>
<div class="hl" style="left:264px;top:776px;width:914px"></div>
<div class="hl" style="left:228px;top:776px;width:15px"></div>
<div class="a" style="left:244px;top:777px;width:20px;height:21px;background:#f7f7f9"></div>
<div class="a" style="left:265px;top:777px;width:912px;height:20px;background:#fff"></div>
<div class="cell" style="left:268px;top:777px;width:81px;letter-spacing:-0.18px">00127B503163</div>
<div class="vl" style="left:349px;top:777px;height:20px"></div>
<div class="cell" style="left:353px;top:777px;width:46px">X1</div>
<div class="vl" style="left:399px;top:777px;height:20px"></div>
<div class="cell" style="left:403px;top:777px;width:79px;letter-spacing:-0.35px">Vufy</div>
<div class="vl" style="left:482px;top:777px;height:20px"></div>
<div class="cell" style="left:486px;top:777px;width:119px">4/1/2013 4:50:32 PM</div>
<div class="vl" style="left:605px;top:777px;height:20px"></div>
<div class="cell" style="left:606px;top:777px;width:50px;text-align:right">644</div>
<div class="vl" style="left:660px;top:777px;height:20px"></div>
<div class="cell" style="left:665px;top:777px;width:90px;letter-spacing:0.2px">192.168.6.101</div>
<div class="vl" style="left:755px;top:777px;height:20px"></div>
<div class="cell" style="left:756px;top:777px;width:60px;text-align:right">8.3</div>
<div class="vl" style="left:820px;top:777px;height:20px"></div>
<div class="cell" style="left:821px;top:777px;width:75px;text-align:right">0.50</div>
<div class="vl" style="left:900px;top:777px;height:20px"></div>
<div class="cell yes" style="left:904px;top:777px;width:96px">Yes</div>
<div class="vl" style="left:1000px;top:777px;height:20px"></div>
<div class="cell" style="left:1004px;top:777px;width:62px">1024x768</div>
<div class="vl" style="left:1066px;top:777px;height:20px"></div>
<div class="cell yes" style="left:1070px;top:777px;width:107px">Yes</div>
<div class="vl" style="left:1177px;top:777px;height:20px"></div>
<div class="vl" style="left:264px;top:777px;height:21px"></div>
<div class="hl" style="left:264px;top:797px;width:914px"></div>
<div class="hl" style="left:228px;top:797px;width:15px"></div>
<div class="a" style="left:244px;top:798px;width:20px;height:21px;background:#f7f7f9"></div>
<div class="a" style="left:265px;top:798px;width:912px;height:20px;background:#fff"></div>
<div class="cell" style="left:268px;top:798px;width:81px;letter-spacing:-0.31px">00127B5845BC</div>
<div class="vl" style="left:349px;top:798px;height:20px"></div>
<div class="cell" style="left:353px;top:798px;width:46px">X1</div>
<div class="vl" style="left:399px;top:798px;height:20px"></div>
<div class="cell" style="left:403px;top:798px;width:79px"></div>
<div class="vl" style="left:482px;top:798px;height:20px"></div>
<div class="cell" style="left:486px;top:798px;width:119px">3/22/2013 1:24:06 PM</div>
<div class="vl" style="left:605px;top:798px;height:20px"></div>
<div class="cell" style="left:606px;top:798px;width:50px;text-align:right">654</div>
<div class="vl" style="left:660px;top:798px;height:20px"></div>
<div class="cell" style="left:665px;top:798px;width:90px;letter-spacing:0.2px">192.168.15.57</div>
<div class="vl" style="left:755px;top:798px;height:20px"></div>
<div class="cell" style="left:756px;top:798px;width:60px;text-align:right">9.6</div>
<div class="vl" style="left:820px;top:798px;height:20px"></div>
<div class="cell" style="left:821px;top:798px;width:75px;text-align:right">0.50</div>
<div class="vl" style="left:900px;top:798px;height:20px"></div>
<div class="cell yes" style="left:904px;top:798px;width:96px">Yes</div>
<div class="vl" style="left:1000px;top:798px;height:20px"></div>
<div class="cell" style="left:1004px;top:798px;width:62px">1024x768</div>
<div class="vl" style="left:1066px;top:798px;height:20px"></div>
<div class="cell yes" style="left:1070px;top:798px;width:107px">Yes</div>
<div class="vl" style="left:1177px;top:798px;height:20px"></div>
<div class="vl" style="left:264px;top:798px;height:21px"></div>
<div class="hl" style="left:264px;top:818px;width:914px"></div>
<div class="hl" style="left:228px;top:818px;width:15px"></div>
<div class="a" style="left:244px;top:819px;width:1322px;height:21px;background:#f7f7f9"></div>
<div class="hl" style="left:244px;top:818px;width:1322px;background:#dcdde2"></div>
<svg class="a" style="left:251px;top:829px" width="8" height="5" viewBox="0 0 8 5"><path d="M0 0 H7 L3.5 4Z" fill="#808088"/></svg>
<div class="a t" style="left:267px;top:824px;font-size:11.5px;letter-spacing:0.1px;font-weight:bold;color:#7b7d88">Location: Test Firmware (1 devices)</div>
<div class="hl" style="left:228px;top:839px;width:15px;background:#dcdde2"></div>
<div class="hl" style="left:264px;top:839px;width:1302px;background:#dcdde2"></div>
<div class="a" style="left:244px;top:840px;width:20px;height:21px;background:#f7f7f9"></div>
<div class="a" style="left:265px;top:840px;width:912px;height:20px;background:#fff"></div>
<div class="cell" style="left:268px;top:840px;width:81px;letter-spacing:-0.24px">00127B5845B4</div>
<div class="vl" style="left:349px;top:840px;height:20px"></div>
<div class="cell" style="left:353px;top:840px;width:46px">X1</div>
<div class="vl" style="left:399px;top:840px;height:20px"></div>
<div class="cell" style="left:403px;top:840px;width:79px;letter-spacing:-0.35px">Pipera Bus</div>
<div class="vl" style="left:482px;top:840px;height:20px"></div>
<div class="cell" style="left:486px;top:840px;width:119px">5/24/2013 6:31:25 PM</div>
<div class="vl" style="left:605px;top:840px;height:20px"></div>
<div class="cell" style="left:606px;top:840px;width:50px;text-align:right">591</div>
<div class="vl" style="left:660px;top:840px;height:20px"></div>
<div class="cell" style="left:665px;top:840px;width:90px;letter-spacing:0.2px">192.168.15.58</div>
<div class="vl" style="left:755px;top:840px;height:20px"></div>
<div class="cell" style="left:756px;top:840px;width:60px;text-align:right">10.3</div>
<div class="vl" style="left:820px;top:840px;height:20px"></div>
<div class="cell" style="left:821px;top:840px;width:75px;text-align:right">0.50</div>
<div class="vl" style="left:900px;top:840px;height:20px"></div>
<div class="cell yes" style="left:904px;top:840px;width:96px">Yes</div>
<div class="vl" style="left:1000px;top:840px;height:20px"></div>
<div class="cell" style="left:1004px;top:840px;width:62px">1024x768</div>
<div class="vl" style="left:1066px;top:840px;height:20px"></div>
<div class="cell yes" style="left:1070px;top:840px;width:107px">Yes</div>
<div class="vl" style="left:1177px;top:840px;height:20px"></div>
<div class="vl" style="left:264px;top:840px;height:21px"></div>
<div class="hl" style="left:264px;top:860px;width:914px"></div>
<div class="hl" style="left:228px;top:860px;width:15px"></div>
<div class="hl" style="left:228px;top:860px;width:1338px;background:#d5d6db"></div>
<svg class="a" style="left:228px;top:869px" width="200" height="10" viewBox="0 0 200 10"><g fill="#1a1a2a"><rect x="4" y="1" width="1.1" height="7"/><path d="M5.3 4.5 L9 1 V8Z M9 4.5 L12.9 1 V8Z"/><path d="M22.2 4.5 L25.7 1 V8Z M25.7 4.5 L30 1 V8Z"/><path d="M42.1 4.5 L46 1 V8Z"/><path d="M146.9 1 V8 L150.9 4.5Z"/><path d="M162.1 1 V8 L166 4.5Z M166 1 V8 L169.6 4.5Z"/><path d="M179 1 V8 L183 4.5Z M183 1 V8 L187 4.5Z"/><rect x="187" y="1" width="1.1" height="7"/></g></svg>
<div class="a t" style="left:288px;top:868px;font-size:11px;color:#1e1e2e">Record 1 of 21</div>
<svg class="a" style="left:424px;top:869px" width="6" height="10" viewBox="0 0 6 10"><path d="M5 1 V8 L1 4.5Z" fill="#c8c9cf"/></svg>
<svg class="a" style="left:1555px;top:869px" width="5" height="8" viewBox="0 0 5 8"><path d="M0 0 V8 L4 4Z" fill="#c5c6cc"/></svg>
<div class="a" id="footer"></div>
<div class="a" style="left:24px;top:905px;width:156px;height:36px;border:1px solid #fff;box-shadow:inset 0 0 0 0.6px rgba(255,255,255,.7)"></div>
<div class="a" style="left:27px;top:908px;width:150px;height:30px;background:#808290"></div>
<div class="a t" style="left:27px;top:918px;width:150px;text-align:center;font-size:11.5px;letter-spacing:-0.35px;color:#fff">Edit Device</div>
<div class="a" style="left:190px;top:908px;width:150px;height:30px;background:#808290"></div>
<div class="a t" style="left:190px;top:918px;width:150px;text-align:center;font-size:11.5px;letter-spacing:-0.35px;color:#fff">Device Details</div>
<div class="a" style="left:353px;top:908px;width:150px;height:30px;background:#808290"></div>
<div class="a t" style="left:353px;top:918px;width:150px;text-align:center;font-size:11.5px;letter-spacing:-0.35px;color:#fff">Show Selection</div>
<div class="a" style="left:516px;top:908px;width:150px;height:30px;background:#808290"></div>
<div class="a t" style="left:516px;top:918px;width:150px;text-align:center;font-size:11.5px;letter-spacing:-0.35px;color:#fff">Export/Print Selected</div>
<div class="a" style="left:679px;top:908px;width:150px;height:30px;background:#808290"></div>
<div class="a t" style="left:679px;top:918px;width:150px;text-align:center;font-size:11.5px;letter-spacing:-0.35px;color:#fff">Expand All</div>
<div class="a" style="left:842px;top:908px;width:150px;height:30px;background:#808290"></div>
<div class="a t" style="left:842px;top:918px;width:150px;text-align:center;font-size:11.5px;letter-spacing:-0.35px;color:#fff">Collapse All</div>
</body></html>
